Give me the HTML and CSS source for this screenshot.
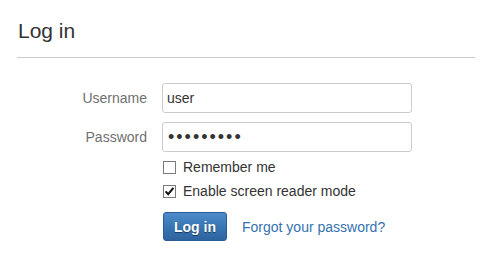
FILE: index.html
```html
<!DOCTYPE html>
<html lang="en">
<head>
    <meta charset="UTF-8">
    <title>Log in</title>
    <link rel="stylesheet" href="styles.css">
</head>
<body>
    <div class="page">
        <!-- Header -->
        <div class="page-header">
            <h1>Log in</h1>
        </div>

        <form class="login-form">
            <div class="fields">
                <div class="field">
                    <label class="field-label" for="username">Username</label>
                    <input class="text-input" id="username" type="text" value="user">
                </div>
                <div class="field">
                    <label class="field-label" for="password">Password</label>
                    <input class="text-input" id="password" type="password" value="123456789">
                </div>
            </div>

            <div class="options">
                <label class="check-row">
                    <span class="check-box"></span>
                    <span>Remember me</span>
                </label>
                <label class="check-row">
                    <span class="check-box">
                        <svg width="11" height="11" viewBox="0 0 11 11">
                            <path d="M1.6 5.4 L4.2 8.2 L9.4 1.8" fill="none" stroke="#111" stroke-width="2"/>
                        </svg>
                    </span>
                    <span>Enable screen reader mode</span>
                </label>

                <div class="actions">
                    <button type="button" class="btn-primary">Log in</button>
                    <a href="#" class="link">Forgot your password?</a>
                </div>
            </div>
        </form>
    </div>
</body>
</html>
```

FILE: styles.css
```css
/* Base */
body, html {
    margin: 0;
    padding: 0;
    background: #fff;
    font-family: 'Liberation Sans', Arial, sans-serif;
    font-size: 14px;
    color: #333;
}

.page {
    padding: 0 18px 0 17px;
}

/* Header */
.page-header {
    padding-top: 18px;
    padding-bottom: 13px;
    border-bottom: 1px solid #cccccc;
}

.page-header h1 {
    margin: 0 0 0 1px;
    font-size: 21px;
    font-weight: normal;
    line-height: 26px;
    color: #333;
}

/* Form */
.login-form {
    margin-top: 25px;
}

.fields {
    display: flex;
    flex-direction: column;
    gap: 9px;
}

.field {
    display: flex;
    align-items: center;
    gap: 15px;
}

.field-label {
    width: 130px;
    text-align: right;
    color: #707070;
}

.text-input {
    box-sizing: border-box;
    width: 250px;
    height: 30px;
    margin: 0;
    padding: 0 4px;
    border: 1px solid #cccccc;
    border-radius: 3px;
    font-family: inherit;
    font-size: 14px;
    color: #333;
    outline: none;
}

#password {
    font-size: 18px;
    letter-spacing: 2px;
    padding-left: 5px;
}

/* Checkbox rows */
.options {
    margin-left: 146px;
    padding-top: 3px;
}

.check-row {
    display: flex;
    align-items: center;
    gap: 7px;
    height: 24px;
}

.check-box {
    box-sizing: border-box;
    width: 13px;
    height: 13px;
    border: 1px solid #7a7a7a;
    background: #fff;
    display: flex;
    align-items: center;
    justify-content: center;
}

/* Actions */
.actions {
    display: flex;
    align-items: center;
    gap: 15px;
    margin-top: 9px;
}

.btn-primary {
    height: 29px;
    padding: 0 10px;
    border: 1px solid #2a5a94;
    border-radius: 3px;
    background: linear-gradient(#4d8bcb, #3572b0 60%, #2e64a0);
    color: #fff;
    font-family: inherit;
    font-size: 14px;
    font-weight: bold;
    text-shadow: 0 1px 1px rgba(0, 0, 0, 0.5);
    cursor: pointer;
}

.link {
    color: #3572b0;
    text-decoration: none;
}
```
